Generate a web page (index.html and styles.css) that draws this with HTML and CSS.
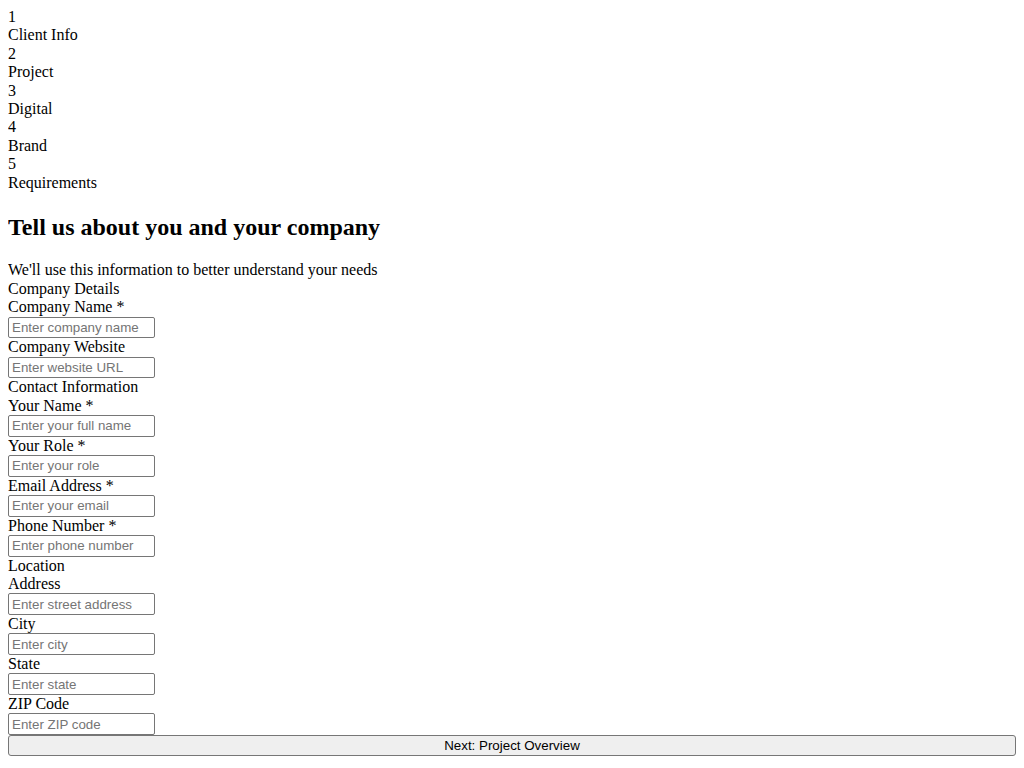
FILE: index.html
```html
<!DOCTYPE html>
<html lang="en">
<head>
<meta charset="utf-8">
<title>Client Intake</title>
<link rel="stylesheet" href="styles.css">
</head>
<body class="page">
<div class="steps">
  <div class="step"><div class="step-num">1</div><div class="step-label">Client Info</div></div>
  <div class="step"><div class="step-num">2</div><div class="step-label">Project</div></div>
  <div class="step"><div class="step-num">3</div><div class="step-label">Digital</div></div>
  <div class="step"><div class="step-num">4</div><div class="step-label">Brand</div></div>
  <div class="step"><div class="step-num">5</div><div class="step-label">Requirements</div></div>
</div>
<h2 class="title">Tell us about you and your company</h2>
<div class="subtitle">We'll use this information to better understand your needs</div>
<form class="form">
  <div class="section">
    <div class="section-title">Company Details</div>
    <div class="field"><label class="label" for="company">Company Name *</label><input class="input" id="company" type="text" placeholder="Enter company name"></div>
    <div class="field"><label class="label" for="website">Company Website</label><input class="input" id="website" type="text" placeholder="Enter website URL"></div>
  </div>
  <div class="section">
    <div class="section-title">Contact Information</div>
    <div class="field"><label class="label" for="name">Your Name *</label><input class="input" id="name" type="text" placeholder="Enter your full name"></div>
    <div class="field"><label class="label" for="role">Your Role *</label><input class="input" id="role" type="text" placeholder="Enter your role"></div>
    <div class="field"><label class="label" for="email">Email Address *</label><input class="input" id="email" type="text" placeholder="Enter your email"></div>
    <div class="field"><label class="label" for="phone">Phone Number *</label><input class="input" id="phone" type="text" placeholder="Enter phone number"></div>
  </div>
  <div class="section">
    <div class="section-title">Location</div>
    <div class="field"><label class="label" for="address">Address</label><input class="input" id="address" type="text" placeholder="Enter street address"></div>
    <div class="field"><label class="label" for="city">City</label><input class="input" id="city" type="text" placeholder="Enter city"></div>
    <div class="field"><label class="label" for="state">State</label><input class="input" id="state" type="text" placeholder="Enter state"></div>
    <div class="field"><label class="label" for="zip">ZIP Code</label><input class="input" id="zip" type="text" placeholder="Enter ZIP code"></div>
  </div>
  <button class="next" type="button">Next: Project Overview</button>
</form>
</body>
</html>
```
FILE: styles.css
```css
.page {
  font-family: "Liberation Serif", "Times New Roman", serif;
  font-size: 16px;
  line-height: 18.4px;
  color: #000;
}
.title {
  margin: 20.9px 0 19.9px;
  line-height: 28.6px;
}
.form {
  margin: 0;
}
.label {
  display: block;
}
.input {
  display: block;
  box-sizing: border-box;
  width: 147px;
  height: 21.6px;
  margin: 0;
  padding: 1px 3px;
  border: 1px solid #767676;
  border-radius: 2px;
  font-family: "Liberation Sans", Arial, sans-serif;
  font-size: 13.33px;
  line-height: 16px;
  background: #fff;
  color: #000;
}
.input::placeholder {
  color: #757575;
}
.next {
  display: block;
  box-sizing: border-box;
  width: 100%;
  height: 21px;
  margin: 0;
  padding: 1px 6px;
  border: 1px solid #767676;
  border-radius: 3px;
  background: #efefef;
  font-family: "Liberation Sans", Arial, sans-serif;
  font-size: 13.33px;
  line-height: 16px;
  color: #000;
}
```
